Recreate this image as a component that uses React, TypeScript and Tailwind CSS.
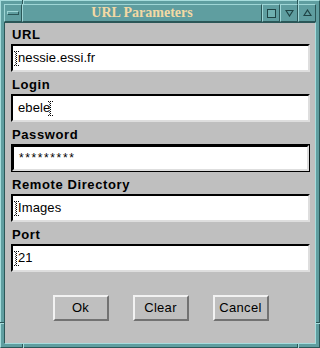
import React from 'react';

const fields = [
  { label: 'URL', value: 'nessie.essi.fr', cursor: 'start' },
  { label: 'Login', value: 'ebele', cursor: 'end' },
  { label: 'Password', value: '*********', cursor: 'none', focused: true },
  { label: 'Remote Directory', value: 'Images', cursor: 'start' },
  { label: 'Port', value: '21', cursor: 'start' },
];

// dotted X-style I-beam text cursor
const IBeam = () => (
  <svg width="5" height="15" viewBox="0 0 5 15" className="shrink-0" shapeRendering="crispEdges">
    <rect x="0" y="0" width="1" height="1" fill="#000" />
    <rect x="2" y="0" width="1" height="1" fill="#000" />
    <rect x="4" y="0" width="1" height="1" fill="#000" />
    {[2, 4, 6, 8, 10, 12].map((y) => (
      <rect key={y} x="2" y={y} width="1" height="1" fill="#000" />
    ))}
    {[1, 3, 5, 7, 9, 11, 13].map((y) => (
      <rect key={y} x="1" y={y} width="1" height="1" fill="#555" />
    ))}
    <rect x="0" y="14" width="1" height="1" fill="#000" />
    <rect x="2" y="14" width="1" height="1" fill="#000" />
    <rect x="4" y="14" width="1" height="1" fill="#000" />
  </svg>
);

const Field = ({ label, value, cursor, focused }: { label: string; value: string; cursor: string; focused?: boolean }) => (
  <>
    <div className="h-[21px] pt-[4px] pl-[1px] text-[13px] leading-[15px] font-bold tracking-[0.6px] text-black">{label}</div>
    <div className={`h-[28px] mb-[1px] ${focused ? 'border border-black' : ''}`}>
      <div className="h-full bg-white border-2 border-t-black border-l-black border-r-[#dedede] border-b-[#dedede] flex items-center pl-[1px] text-[13px] text-black">
        {cursor === 'start' && <IBeam />}
        <span className={`${cursor === 'start' ? '-ml-[1px]' : 'ml-[4px]'} ${focused ? 'tracking-[1.6px] text-[12px]' : 'tracking-[0.1px]'}`}>{value}</span>
        {cursor === 'end' && <span className="-ml-[2px]"><IBeam /></span>}
      </div>
    </div>
  </>
);

const TitleBox = ({ children, className = '' }: { children?: React.ReactNode; className?: string }) => (
  <div className={`h-full border border-t-[#9fd6d6] border-l-[#9fd6d6] border-r-[#2b5758] border-b-[#2b5758] bg-[#5f9ea0] flex items-center justify-center ${className}`}>
    {children}
  </div>
);

const App = () => {
  return (
    <div className="w-[320px] h-[348px] relative bg-[#5f9ea0] border border-t-[#a6dcdc] border-l-[#a6dcdc] border-r-[#2b5758] border-b-[#2b5758] p-[3px] flex flex-col font-['Liberation_Sans',Arial,sans-serif]">
      {/* title bar */}
      <div className="h-[18px] flex">
        <TitleBox className="w-[18px]">
          <div className="w-[12px] h-[4px] border border-t-[#9fd6d6] border-l-[#9fd6d6] border-r-[#2b5758] border-b-[#2b5758]" />
        </TitleBox>
        <TitleBox className="flex-1">
          <span className="font-['Liberation_Serif','Times_New_Roman',serif] font-bold text-[14px] leading-[16px] text-[#f3d9a4]">URL Parameters</span>
        </TitleBox>
        <TitleBox className="w-[18px]">
          <svg width="9" height="9" viewBox="0 0 9 9" shapeRendering="crispEdges">
            <rect x="0.5" y="0.5" width="8" height="8" fill="#6fb0b0" stroke="#1f4445" />
          </svg>
        </TitleBox>
        <TitleBox className="w-[18px]">
          <svg width="9" height="8" viewBox="0 0 9 8">
            <path d="M1 1.5 H8 L4.5 7 Z" fill="none" stroke="#1f4445" strokeWidth="1.2" />
          </svg>
        </TitleBox>
        <TitleBox className="w-[18px]">
          <svg width="9" height="8" viewBox="0 0 9 8">
            <path d="M4.5 1 L8 6.5 H1 Z" fill="none" stroke="#1f4445" strokeWidth="1.2" />
          </svg>
        </TitleBox>
      </div>

      {/* client area */}
      <div className="flex-1 bg-[#bfbfbf] border border-t-[#2b5758] border-l-[#2b5758] border-r-[#a6dcdc] border-b-[#a6dcdc] pl-[6px] pr-[5px] flex flex-col">
        {fields.map((f) => (
          <Field key={f.label} {...f} />
        ))}
        <div className="mt-[22px] flex justify-center gap-[24px]">
          {['Ok', 'Clear', 'Cancel'].map((b) => (
            <button
              key={b}
              className="w-[56px] h-[26px] border-2 border-t-[#f2f2f2] border-l-[#f2f2f2] border-r-[#727272] border-b-[#727272] bg-[#bfbfbf] text-[13px] text-black flex items-center justify-center tracking-[0.3px]"
            >
              {b}
            </button>
          ))}
        </div>
      </div>

      {/* resize corner notches */}
      <div className="absolute left-[-1px] top-[321px] w-[4px] h-[1px] bg-[#2b5758]" />
      <div className="absolute left-[-1px] top-[322px] w-[4px] h-[1px] bg-[#a6dcdc]" />
      <div className="absolute right-[-1px] top-[321px] w-[4px] h-[1px] bg-[#2b5758]" />
      <div className="absolute right-[-1px] top-[322px] w-[4px] h-[1px] bg-[#a6dcdc]" />
      <div className="absolute bottom-[-1px] left-[21px] w-[1px] h-[4px] bg-[#2b5758]" />
      <div className="absolute bottom-[-1px] left-[22px] w-[1px] h-[4px] bg-[#a6dcdc]" />
      <div className="absolute bottom-[-1px] left-[296px] w-[1px] h-[4px] bg-[#2b5758]" />
      <div className="absolute bottom-[-1px] left-[297px] w-[1px] h-[4px] bg-[#a6dcdc]" />
      <div className="absolute top-[-1px] left-[21px] w-[1px] h-[4px] bg-[#2b5758]" />
      <div className="absolute top-[-1px] left-[22px] w-[1px] h-[4px] bg-[#a6dcdc]" />
      <div className="absolute top-[-1px] left-[296px] w-[1px] h-[4px] bg-[#2b5758]" />
      <div className="absolute top-[-1px] left-[297px] w-[1px] h-[4px] bg-[#a6dcdc]" />
    </div>
  );
};

export default App;
